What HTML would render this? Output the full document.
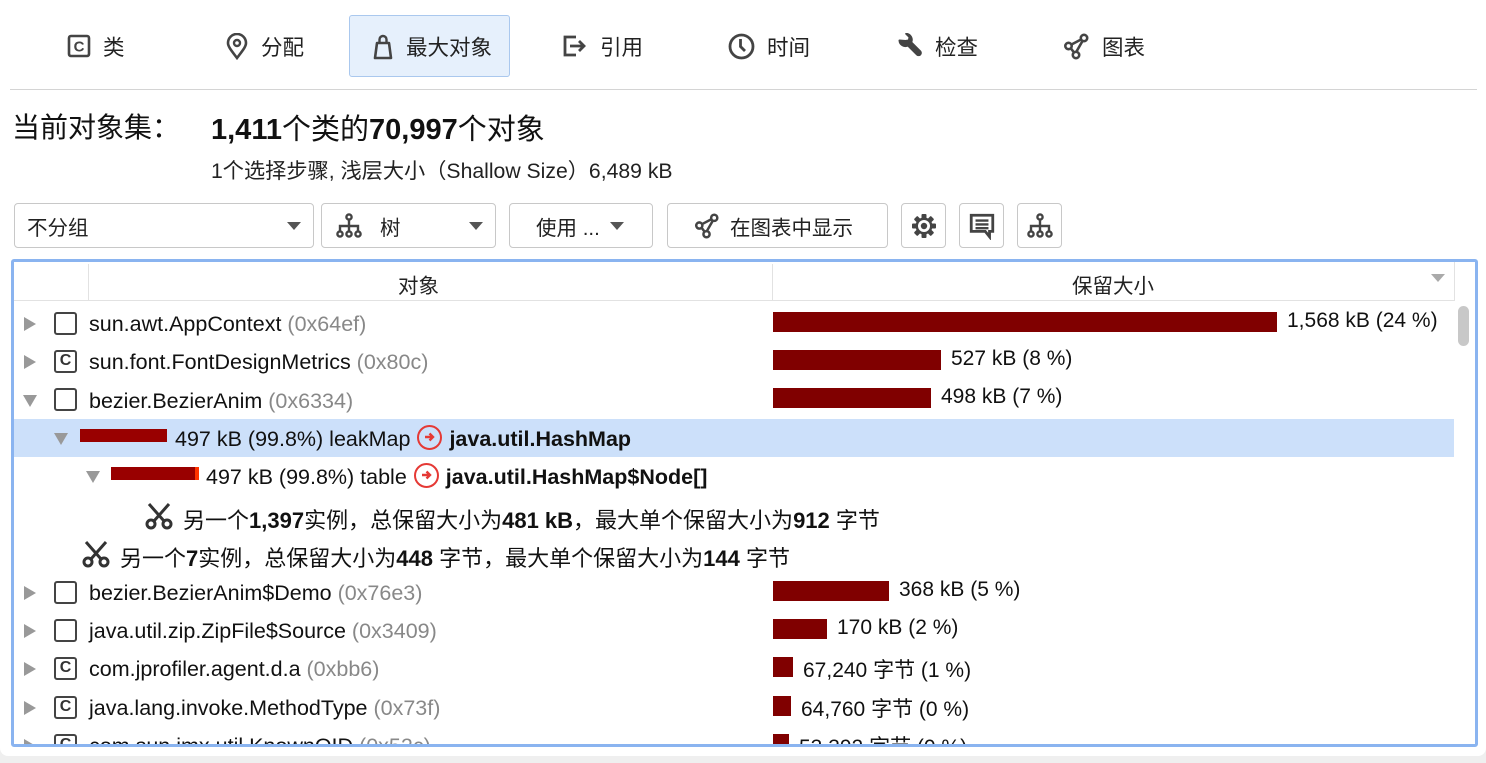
<!DOCTYPE html>
<html><head><meta charset="utf-8"><style>
*{box-sizing:border-box;margin:0;padding:0}
body{width:1486px;height:763px;background:#efefef;font-family:"Liberation Sans","Noto Sans CJK SC",sans-serif;color:#111;position:relative;overflow:hidden}
.panel{position:absolute;left:0;top:0;width:1486px;height:756px;background:#fff;border-radius:0 0 8px 8px}
.a{position:absolute;white-space:nowrap}
.tab{position:absolute;top:15px;height:62px;display:flex;align-items:center;font-size:21.5px;color:#222}
.tab svg{margin-right:12px}
.btn{position:absolute;top:203px;height:45px;border:1px solid #c8c8c8;border-radius:4px;background:#fff;display:flex;align-items:center;font-size:20.5px;color:#222}
.tri{width:0;height:0;border-left:7px solid transparent;border-right:7px solid transparent;border-top:8px solid #555;position:absolute}
.exp{position:absolute;width:0;height:0}
.er{border-top:7px solid transparent;border-bottom:7px solid transparent;border-left:12px solid #999}
.ed{border-left:7px solid transparent;border-right:7px solid transparent;border-top:12px solid #999}
.box{position:absolute;width:23px;height:23px;border:2.5px solid #444;border-radius:3px;font-size:16px;font-weight:bold;text-align:center;line-height:18px;color:#333}
.g{color:#888}
.bar{position:absolute;background:#800000;height:20px}
.t{position:absolute;white-space:nowrap;font-size:21.5px}
.pct{position:absolute;font-size:21px}
.ref{display:inline-block;width:25px;height:25px;border:2.5px solid #e53935;border-radius:50%;vertical-align:-4px;position:relative;margin:0 7px}
b{font-weight:bold}
</style></head><body>
<div class="panel"></div>
<div class="a" style="left:349px;top:15px;width:161px;height:62px;background:#e6f0fc;border:1px solid #aac8ee;border-radius:3px"></div>
<div class="tab" style="left:67px"><svg width="24" height="24" viewBox="0 0 24 24"><rect x="2" y="2" width="20" height="20" rx="2" fill="none" stroke="#444" stroke-width="2.6"/><text x="12" y="17.5" font-size="15" font-weight="bold" text-anchor="middle" fill="#444" font-family="Liberation Sans">C</text></svg>类</div>
<div class="tab" style="left:225px"><svg width="24" height="27" viewBox="0 0 24 27"><path d="M12 25C6 17 3 13.5 3 10a9 9 0 0 1 18 0C21 13.5 18 17 12 25z" fill="none" stroke="#444" stroke-width="2.6"/><circle cx="12" cy="10" r="3" fill="none" stroke="#444" stroke-width="2.4"/></svg>分配</div>
<div class="tab" style="left:372px"><svg width="22" height="27" viewBox="0 0 22 27"><path d="M3 25L5 10h12l2 15z" fill="none" stroke="#444" stroke-width="2.6" stroke-linejoin="round"/><path d="M7.5 10V6.5a3.5 3.5 0 0 1 7 0V10" fill="none" stroke="#444" stroke-width="2.4"/></svg>最大对象</div>
<div class="tab" style="left:562px"><svg width="26" height="24" viewBox="0 0 26 24"><path d="M14 3H3v18h11" fill="none" stroke="#444" stroke-width="2.8"/><path d="M8 12h14M17 7l5 5-5 5" fill="none" stroke="#444" stroke-width="2.8"/></svg>引用</div>
<div class="tab" style="left:728px"><svg width="27" height="27" viewBox="0 0 27 27"><circle cx="13.5" cy="13.5" r="11.5" fill="none" stroke="#444" stroke-width="2.8"/><path d="M12.5 6v7.5l4.5 4.5" fill="none" stroke="#444" stroke-width="2.8"/></svg>时间</div>
<div class="tab" style="left:897px"><svg width="26" height="26" viewBox="0 0 26 26"><path d="M2.5 7.5a6 6 0 0 0 8.5 5l9 9a2.2 2.2 0 0 0 3.2-3.2l-9-9a6 6 0 0 0-5-8.5l3.3 3.3-.6 3.3-3.3.6z" fill="#444" stroke="#444" stroke-width="2" stroke-linejoin="round"/></svg>检查</div>
<div class="tab" style="left:1063px"><svg width="27" height="27" viewBox="0 0 27 27"><g fill="none" stroke="#444" stroke-width="2.6"><circle cx="5.5" cy="13" r="3.2"/><circle cx="21" cy="5" r="3.2"/><circle cx="13" cy="22" r="3.2"/><path d="M8.5 11.5l9.5-5M8 15.5l3 4M13.5 18.5l6-10.5"/></g></svg>图表</div>
<div class="a" style="left:10px;top:89px;width:1467px;height:1px;background:#d4d4d4"></div>
<div class="a" style="left:12px;top:106px;font-size:28px">当前对象集：</div>
<div class="a" style="left:211px;top:106px;font-size:29px"><b>1,411</b>个类的<b>70,997</b>个对象</div>
<div class="a" style="left:211px;top:154px;font-size:21.2px;color:#222">1个选择步骤, 浅层大小（Shallow Size）6,489 kB</div>
<div class="btn" style="left:14px;width:300px;padding-left:12px">不分组<div class="tri" style="right:12px;top:18px"></div></div>
<div class="btn" style="left:321px;width:175px;padding-left:14px"><svg width="26" height="26" viewBox="0 0 26 26"><g fill="none" stroke="#444" stroke-width="2.4"><circle cx="13" cy="4" r="2.6"/><circle cx="4" cy="21" r="2.6"/><circle cx="13" cy="21" r="2.6"/><circle cx="22" cy="21" r="2.6"/><path d="M13 6.5v12M4 18.5V13h18v5.5"/></g></svg><span style="margin-left:18px">树</span><div class="tri" style="right:12px;top:18px"></div></div>
<div class="btn" style="left:509px;width:144px;padding-left:26px">使用 ...<div class="tri" style="right:28px;top:18px"></div></div>
<div class="btn" style="left:667px;width:221px;padding-left:26px"><svg width="26" height="26" viewBox="0 0 27 27"><g fill="none" stroke="#444" stroke-width="2.6"><circle cx="5.5" cy="13" r="3.2"/><circle cx="21" cy="5" r="3.2"/><circle cx="13" cy="22" r="3.2"/><path d="M8.5 11.5l9.5-5M8 15.5l3 4M13.5 18.5l6-10.5"/></g></svg><span style="margin-left:10px">在图表中显示</span></div>
<div class="btn" style="left:901px;width:45px;justify-content:center"><svg width="28" height="28" viewBox="0 0 28 28"><g fill="#444" transform="translate(14 14)"><rect x="-2.5" y="-12" width="5" height="24" rx="1"/><rect x="-2.5" y="-12" width="5" height="24" rx="1" transform="rotate(45)"/><rect x="-2.5" y="-12" width="5" height="24" rx="1" transform="rotate(90)"/><rect x="-2.5" y="-12" width="5" height="24" rx="1" transform="rotate(135)"/><circle r="8.5"/><circle r="6" fill="#fff"/><circle r="3.2"/></g></svg></div>
<div class="btn" style="left:959px;width:45px;justify-content:center"><svg width="28" height="28" viewBox="0 0 26 26"><path d="M3 3h20v15h-3v5l-4-5H3z" fill="none" stroke="#444" stroke-width="2.6"/><path d="M7 8h12M7 11.5h12M7 15h12" stroke="#444" stroke-width="2.2"/></svg></div>
<div class="btn" style="left:1017px;width:45px;justify-content:center"><svg width="26" height="26" viewBox="0 0 26 26"><g fill="none" stroke="#444" stroke-width="2.4"><circle cx="13" cy="4" r="2.6"/><circle cx="4" cy="21" r="2.6"/><circle cx="13" cy="21" r="2.6"/><circle cx="22" cy="21" r="2.6"/><path d="M13 6.5v12M4 18.5V13h18v5.5"/></g></svg></div>
<div class="a" style="left:11px;top:259px;width:1467px;height:488px;border:3px solid #8ab4f0;border-radius:3px;background:#fff"></div>
<div class="a" style="left:14px;top:262px;width:1440px;height:39px;border-bottom:1px solid #e2e2e2"></div>
<div class="a" style="left:88px;top:264px;width:1px;height:36px;background:#e2e2e2"></div>
<div class="a" style="left:772px;top:264px;width:1px;height:36px;background:#e2e2e2"></div>
<div class="a" style="left:1454px;top:262px;width:1px;height:39px;background:#e2e2e2"></div>
<div class="a" style="left:398px;top:269px;font-size:20.5px;color:#222">对象</div>
<div class="a" style="left:1072px;top:269px;font-size:20.5px;color:#222">保留大小</div>
<div class="tri" style="left:1431px;top:274px;border-top-color:#aaa"></div>
<div class="a" style="left:1458px;top:306px;width:11px;height:40px;background:#c8c8c8;border-radius:6px"></div>
<div class="a" style="left:14px;top:419px;width:1440px;height:38px;background:#cce0fa"></div>

<div style="position:absolute;left:14px;top:301px;width:1440px;height:443px;overflow:hidden">
<div style="position:relative;left:-14px;top:-301px">
<div class="exp er" style="left:24px;top:317px"></div><div class="box" style="left:54px;top:312px"></div>
<div class="t" style="left:89px;top:312px">sun.awt.AppContext <span class="g">(0x64ef)</span></div>
<div class="bar" style="left:773px;top:312px;width:504px"></div><div class="pct" style="left:1287px;top:309px">1,568 kB (24 %)</div>

<div class="exp er" style="left:24px;top:355px"></div><div class="box" style="left:54px;top:350px">C</div>
<div class="t" style="left:89px;top:350px">sun.font.FontDesignMetrics <span class="g">(0x80c)</span></div>
<div class="bar" style="left:773px;top:350px;width:168px"></div><div class="pct" style="left:951px;top:347px">527 kB (8 %)</div>

<div class="exp ed" style="left:23px;top:395px"></div><div class="box" style="left:54px;top:388px"></div>
<div class="t" style="left:89px;top:389px">bezier.BezierAnim <span class="g">(0x6334)</span></div>
<div class="bar" style="left:773px;top:388px;width:158px"></div><div class="pct" style="left:941px;top:385px">498 kB (7 %)</div>

<div class="exp ed" style="left:54px;top:433px"></div>
<div class="bar" style="left:80px;top:429px;width:87px;height:13px;background:#990000"></div>
<div class="t" style="left:175px;top:425px">497 kB (99.8%) leakMap<span class="ref"><svg width="20" height="20" viewBox="0 0 20 20" style="position:absolute;left:0;top:0"><path d="M6 10h8M10.5 6.5L14 10l-3.5 3.5" fill="none" stroke="#e53935" stroke-width="2.4"/></svg></span><b>java.util.HashMap</b></div>

<div class="exp ed" style="left:86px;top:471px"></div>
<div class="bar" style="left:111px;top:467px;width:84px;height:13px;background:#990000"></div><div class="bar" style="left:195px;top:467px;width:4px;height:13px;background:#ff3300"></div>
<div class="t" style="left:206px;top:463px">497 kB (99.8%) table<span class="ref"><svg width="20" height="20" viewBox="0 0 20 20" style="position:absolute;left:0;top:0"><path d="M6 10h8M10.5 6.5L14 10l-3.5 3.5" fill="none" stroke="#e53935" stroke-width="2.4"/></svg></span><b>java.util.HashMap$Node[]</b></div>

<svg class="a" style="left:145px;top:502px" width="28" height="28" viewBox="0 0 28 28"><g fill="none" stroke="#333" stroke-width="3"><circle cx="6" cy="22" r="4"/><circle cx="22" cy="22" r="4"/><path d="M9 19L24 2M19 19L4 2"/></g></svg>
<div class="t" style="left:183px;top:503px;font-size:22px">另一个<b>1,397</b>实例，总保留大小为<b>481 kB</b>，最大单个保留大小为<b>912</b> 字节</div>

<svg class="a" style="left:82px;top:540px" width="28" height="28" viewBox="0 0 28 28"><g fill="none" stroke="#333" stroke-width="3"><circle cx="6" cy="22" r="4"/><circle cx="22" cy="22" r="4"/><path d="M9 19L24 2M19 19L4 2"/></g></svg>
<div class="t" style="left:120px;top:541px;font-size:22px">另一个<b>7</b>实例，总保留大小为<b>448</b> 字节，最大单个保留大小为<b>144</b> 字节</div>

<div class="exp er" style="left:24px;top:586px"></div><div class="box" style="left:54px;top:581px"></div>
<div class="t" style="left:89px;top:581px">bezier.BezierAnim$Demo <span class="g">(0x76e3)</span></div>
<div class="bar" style="left:773px;top:581px;width:116px"></div><div class="pct" style="left:899px;top:578px">368 kB (5 %)</div>

<div class="exp er" style="left:24px;top:624px"></div><div class="box" style="left:54px;top:619px"></div>
<div class="t" style="left:89px;top:619px">java.util.zip.ZipFile$Source <span class="g">(0x3409)</span></div>
<div class="bar" style="left:773px;top:619px;width:54px"></div><div class="pct" style="left:837px;top:616px">170 kB (2 %)</div>

<div class="exp er" style="left:24px;top:662px"></div><div class="box" style="left:54px;top:657px">C</div>
<div class="t" style="left:89px;top:657px">com.jprofiler.agent.d.a <span class="g">(0xbb6)</span></div>
<div class="bar" style="left:773px;top:657px;width:20px"></div><div class="pct" style="left:803px;top:654px">67,240 字节 (1 %)</div>

<div class="exp er" style="left:24px;top:701px"></div><div class="box" style="left:54px;top:696px">C</div>
<div class="t" style="left:89px;top:696px">java.lang.invoke.MethodType <span class="g">(0x73f)</span></div>
<div class="bar" style="left:773px;top:696px;width:18px"></div><div class="pct" style="left:801px;top:693px">64,760 字节 (0 %)</div>

<div class="exp er" style="left:24px;top:739px"></div><div class="box" style="left:54px;top:734px">C</div>
<div class="t" style="left:89px;top:734px">com.sun.jmx.util.KnownOID <span class="g">(0x52c)</span></div>
<div class="bar" style="left:773px;top:734px;width:16px"></div><div class="pct" style="left:799px;top:731px">53,392 字节 (0 %)</div>
</div></div>
</body></html>
